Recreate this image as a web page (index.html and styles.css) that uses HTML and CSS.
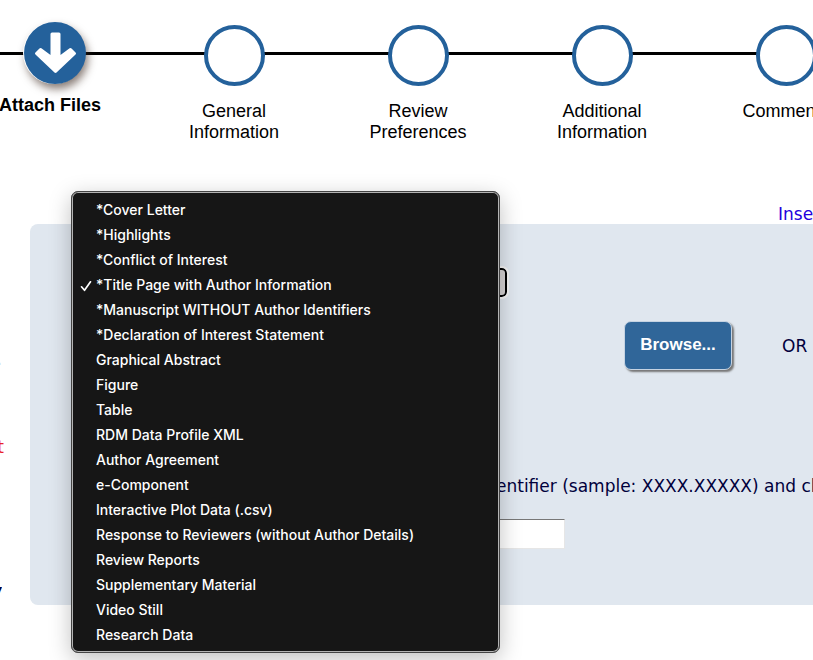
FILE: index.html
```html
<!DOCTYPE html>
<html lang="en">
<head>
<meta charset="utf-8">
<title>Attach Files</title>
<link rel="stylesheet" href="styles.css">
</head>
<body>
<nav class="progress" aria-label="Submission steps">
  <ol class="steps">
    <li class="step step-active" aria-current="step">
      <span class="dot"><svg viewBox="0 0 62 62" aria-hidden="true"><path d="M28 12H35V36L46.500 27.500L50.500 31.500L31.500 49.500L12.500 31.500L16.500 27.500L28 36Z" fill="#fff" stroke="#fff" stroke-width="3" stroke-linejoin="round"/></svg></span>
      <span class="label">Attach Files</span>
    </li>
    <li class="step"><span class="dot"></span><span class="label">General<br>Information</span></li>
    <li class="step"><span class="dot"></span><span class="label">Review<br>Preferences</span></li>
    <li class="step"><span class="dot"></span><span class="label">Additional<br>Information</span></li>
    <li class="step"><span class="dot"></span><span class="label">Comments</span></li>
  </ol>
</nav>
<main class="content">
  <aside class="notes">
    <p class="note note-faint">.</p>
    <p class="note note-red">t</p>
    <p class="note note-strong">w</p>
  </aside>
  <section class="work">
    <div class="links"><a href="#">Insert</a></div>
    <form class="panel">
      <div class="type-field">
        <select class="type-select" aria-label="Item type"><option></option></select>
        <ul class="menu" role="listbox" aria-label="Item type">
          <li role="option">*Cover Letter</li>
          <li role="option">*Highlights</li>
          <li role="option">*Conflict of Interest</li>
          <li role="option" aria-selected="true"><svg class="check" viewBox="0 0 12 12" aria-hidden="true"><path d="M1.500 6.800L4.500 10.300L10.500 1.800" fill="none" stroke="#fff" stroke-width="1.700" stroke-linecap="round" stroke-linejoin="round"/></svg>*Title Page with Author Information</li>
          <li role="option">*Manuscript WITHOUT Author Identifiers</li>
          <li role="option">*Declaration of Interest Statement</li>
          <li role="option">Graphical Abstract</li>
          <li role="option">Figure</li>
          <li role="option">Table</li>
          <li role="option">RDM Data Profile XML</li>
          <li role="option">Author Agreement</li>
          <li role="option">e-Component</li>
          <li role="option">Interactive Plot Data (.csv)</li>
          <li role="option">Response to Reviewers (without Author Details)</li>
          <li role="option">Review Reports</li>
          <li role="option">Supplementary Material</li>
          <li role="option">Video Still</li>
          <li role="option">Research Data</li>
        </ul>
      </div>
      <div class="upload">
        <button class="browse" type="button">Browse...</button>
        <span>OR</span>
      </div>
      <label class="hint" for="identifier">entifier (sample: XXXX.XXXXX) and click</label>
      <input class="identifier" id="identifier" type="text">
    </form>
  </section>
</main>
</body>
</html>
```
FILE: styles.css
```css
* { box-sizing: border-box; }

body {
  margin: 0;
  min-height: 100vh;
  background: #fff;
  color: #00003c;
  font: 17px/24px "DejaVu Sans", sans-serif;
}

.progress {
  padding-top: 22px;
  overflow: hidden;
  font: 18px/21px "Liberation Sans", sans-serif;
  color: #000;
  background: linear-gradient(#000, #000) 0 52px / calc(100% - 28px) 3px no-repeat;
}

.steps {
  display: flex;
  margin: 0 0 0 -42px;
  padding: 0;
  list-style: none;
}

.step {
  flex: 0 0 184px;
  display: flex;
  flex-direction: column;
  align-items: center;
  gap: 15px;
  padding-top: 3px;
  text-align: center;
}

.dot {
  width: 61px;
  height: 61px;
  border: 4px solid #24619b;
  border-radius: 50%;
  background: #fff;
}

.step-active {
  gap: 11px;
  padding-top: 0;
  font-weight: bold;
}

.step-active .dot {
  width: 62px;
  height: 62px;
  margin-left: 10px;
  border: 0;
  background: #24619b;
  box-shadow: -1px 0 0 #fff, 2px 5px 9px rgba(60, 40, 30, 0.6);
}

.dot svg { display: block; }

.content {
  display: flex;
  padding: 59px 0 55px;
  overflow: hidden;
}

.notes {
  flex: 0 0 30px;
  padding-top: 145px;
}

.note {
  display: flex;
  justify-content: flex-end;
  width: 4px;
  margin: 0;
  overflow: hidden;
}

.note-faint { height: 88px; color: #aaa; width: 2px; }
.note-red { height: 144px; color: #e8202c; }
.note-strong { width: 2px; font-style: italic; font-weight: bold; }

.work {
  flex: 1;
  min-width: 0;
}

.links {
  height: 22px;
  padding-left: 748px;
}

.links a {
  color: #2200dd;
  text-decoration: none;
}

.panel {
  display: flex;
  flex-direction: column;
  align-items: flex-start;
  padding: 44px 0 56px 60px;
  border-radius: 8px 0 0 8px;
  background: #e0e7ef;
  white-space: nowrap;
}

.type-field { position: relative; }

.type-select {
  display: block;
  appearance: none;
  width: 417px;
  height: 29px;
  border: 2px solid #000;
  border-radius: 5px;
  background: #d5d2d2;
  outline: 2px solid #f4f4f4;
}

.menu {
  position: absolute;
  top: -77px;
  left: -19px;
  width: 429px;
  margin: 0;
  padding: 5px 0 5px 24px;
  border: 1px solid #b0b0b0;
  outline: 1px solid #444;
  outline-offset: -1px;
  border-radius: 7px;
  background: #161616;
  box-shadow: inset 0 0 0 1px #b4b4b4, 0 6px 22px rgba(0, 0, 0, 0.25);
  color: #fff;
  font: 500 14px/25px Inter, sans-serif;
  list-style: none;
}

.menu li {
  position: relative;
}

.check {
  position: absolute;
  top: 8px;
  left: -16px;
  width: 12px;
  height: 12px;
}

.upload {
  display: flex;
  align-items: center;
  gap: 50px;
  margin-top: 24px;
  padding-left: 534px;
}

.browse {
  width: 108px;
  height: 49px;
  padding: 0 0 2px;
  border: 1px solid #c5d3e2;
  border-radius: 7px;
  background: #306699;
  box-shadow: 2px 2px 2px #777;
  color: #fff;
  font: bold 17px "Liberation Sans", sans-serif;
}

.hint {
  margin-top: 104px;
  padding-left: 406px;
}

.identifier {
  width: 475px;
  height: 30px;
  margin-top: 21px;
  border: 1px solid #e6e6e6;
  border-top-color: #777;
  background: #fff;
}
```
